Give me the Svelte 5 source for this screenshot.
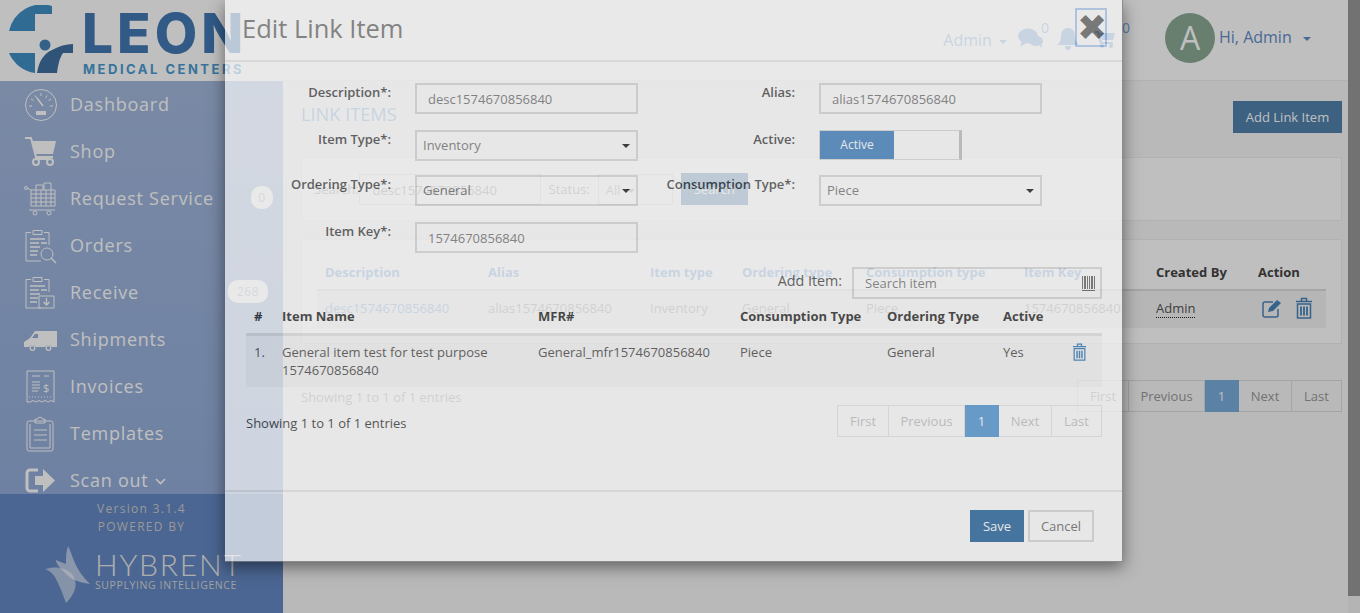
<script>
  const navItems = [
    { label: "Dashboard", icon: "gauge" },
    { label: "Shop", icon: "cart" },
    { label: "Request Service", icon: "request", badge: "0" },
    { label: "Orders", icon: "orders" },
    { label: "Receive", icon: "receive", badge: "268" },
    { label: "Shipments", icon: "truck" },
    { label: "Invoices", icon: "invoice" },
    { label: "Templates", icon: "template" },
    { label: "Scan out", icon: "scan", caret: true }
  ];
  const pages = ["First", "Previous", "1", "Next", "Last"];
</script>

{#snippet trash(w, h)}
  <svg width={w} height={h} viewBox="0 0 18 22" fill="none" stroke="currentColor" stroke-width="1.5">
    <path d="M1 4.5h16M6.5 4V1.5h5V4" />
    <path d="M2.5 7h13v14h-13z" />
    <path d="M6 9.5v9M9 9.5v9M12 9.5v9" stroke-width="1.8" />
  </svg>
{/snippet}

{#snippet navIcon(name)}
  <svg width="36" height="36" viewBox="0 0 36 36" fill="none" stroke="currentColor" stroke-width="1">
    {#if name === "gauge"}
      <circle cx="18" cy="18" r="15.5" />
      <path d="M18 6v3M8 12l2.5 1.5M28 12l-2.5 1.5M6 19h3M27 19h3M12 8.500l1.500 2.500M24 8.500l-1.500 2.500" />
      <path d="M14 11l6 8" stroke-width="1.600" />
      <path d="M13 24h10v4H13z" fill="currentColor" stroke="none" />
    {:else if name === "cart"}
      <path d="M2 4h6l5 19h17" stroke-width="2" />
      <path d="M9 7h24l-3 13H13z" fill="currentColor" stroke="none" />
      <circle cx="13" cy="28" r="3" stroke-width="2" />
      <circle cx="27" cy="28" r="3" stroke-width="2" />
      <path d="M13 25h14" stroke-width="2" />
    {:else if name === "request"}
      <circle cx="3" cy="7" r="1.500" />
      <path d="M4 7l4 2v16h24V9H8M8 13h24M8 17h24M8 21h24M13 9v16M18 9v16M23 9v16M28 9v16M6 29h26" />
      <path d="M13 9V4h7v5M21 9V2h7v7" />
      <circle cx="12" cy="32" r="2" />
      <circle cx="26" cy="32" r="2" />
    {:else if name === "orders" || name === "receive"}
      <path d="M3 4.500h5M21 4.500h5V17M3 4.500V33h15" />
      <path d="M10 2.500h9v4h-9z" />
      <path d="M7 11h15M7 15h9M18 15h6M7 19h10M7 23h8M7 27h7" stroke-width="1.300" />
      {#if name === "orders"}
        <circle cx="24" cy="26" r="6" />
        <path d="M28 30l5 5" stroke-width="1.400" />
      {:else}
        <path d="M16 21h15v12H16z" />
        <path d="M23.500 23v7M20.500 27l3 3 3-3" stroke-width="1.300" />
      {/if}
    {:else if name === "truck"}
      <path d="M1 25v-5l6-4 5-7h22v16h-5a4 4 0 0 0-7 0H13a4 4 0 0 0-7 0z" fill="currentColor" stroke="none" />
      <path d="M9 16l3-4h3v4z" fill="#97aed9" stroke="none" />
      <circle cx="9.500" cy="26" r="2.300" stroke-width="1.300" />
      <circle cx="25.500" cy="26" r="2.300" stroke-width="1.300" />
    {:else if name === "invoice"}
      <path d="M4 33V2h27v31l-3-1.500-3 1.500-3-1.500-3 1.500-3-1.500-3 1.500-3-1.500-3 1.500z" />
      <path d="M9 7h8M21 7h5M9 13h8M9 16h8M9 19h8M9 22h6" stroke-width="1.200" />
      <text x="20" y="23" font-size="11" fill="currentColor" stroke="none" font-family="Open Sans, sans-serif">$</text>
      <path d="M6 28h23" stroke-dasharray="1 2" />
    {:else if name === "template"}
      <rect x="4" y="5" width="26" height="30" rx="2" />
      <path d="M7 8v24h20V8" />
      <path d="M12 6V3h3a2 2 0 0 1 4 0h3v4H12zM11 14h13M11 19h13M11 24h13" />
    {:else if name === "scan"}
      <path d="M15 7H7a3 3 0 0 0-3 3v15a3 3 0 0 0 3 3h8" stroke-width="3" />
      <path d="M12 13h8V6l12 11.500L20 29v-7h-8z" fill="currentColor" stroke="none" />
    {/if}
  </svg>
{/snippet}

<div class="page">
  <aside class="sidebar">
    <div class="logo">
      <svg class="mark" width="66" height="70" viewBox="9 5 66 70">
        <path d="M52 6v8H35v17H9A33.500 33.500 0 0 1 52 6z" fill="#3f8fc4" />
        <path d="M9 53h26v20A33.500 33.500 0 0 1 9 53z" fill="#3f8fc4" />
        <circle cx="45" cy="45" r="5.500" fill="#4682b4" />
        <path d="M37 73c2-13 8-20 15-23 7-4 14-6 21-6v9H63c-4 6-5 13-6 20z" fill="#41719f" />
      </svg>
      <div class="brand">
        <div class="leon">LEON</div>
        <div class="medical">MEDICAL CENTERS</div>
      </div>
    </div>
    <nav>
      {#each navItems as item}
        <div class="nav-item">
          <span class="nav-icon">{@render navIcon(item.icon)}</span>
          <span class="nav-label">{item.label}</span>
          {#if item.caret}
            <svg class="chev" width="11" height="7" viewBox="0 0 11 7" fill="none" stroke="currentColor" stroke-width="1.600"><path d="M1 1l4.500 4.500L10 1" /></svg>
          {/if}
          {#if item.badge}
            <span class="badge">{item.badge}</span>
          {/if}
        </div>
      {/each}
    </nav>
    <footer class="side-foot">
      <div class="version">Version 3.1.4</div>
      <div class="version">POWERED BY</div>
      <div class="hybrent">
        <svg width="48" height="60" viewBox="0 0 48 60">
          <path d="M24 2c6 12 6 22 22 38-12-2-18-4-24-10C16 24 12 20 12 16c4 2 8 3 10 4C22 14 22 8 24 2z" fill="#fff" opacity=".55" />
          <path d="M1 25c10-3 20-2 27 5 6 8 5 18 -6 29 -3-8-5-14-9-22-3-7-7-10-12-12z" fill="#fff" opacity=".5" />
        </svg>
        <div class="hy-text">
          <div class="hy-name">HYBRENT</div>
          <div class="hy-sub">SUPPLYING INTELLIGENCE</div>
        </div>
      </div>
    </footer>
  </aside>

  <div class="main">
    <header class="topbar">
      <div class="admin">Admin <span class="caret"></span></div>
      <svg class="top-icon" width="25" height="22" viewBox="0 0 25 22" fill="#78a8dc">
        <ellipse cx="10" cy="8" rx="10" ry="7.500" />
        <path d="M4 13l-2 6 6-4z" />
        <ellipse cx="18" cy="13" rx="7" ry="5" />
        <path d="M20 16l4 4-1-6z" />
      </svg>
      <span class="count first">0</span>
      <svg class="top-icon bell" width="22" height="22" viewBox="0 0 22 22" fill="#78a8dc">
        <path d="M11 0c5 0 7 4 7 9 0 4 2 6 4 8H0c2-2 4-4 4-8 0-5 2-9 7-9zM8 18h6c0 2-1 4-3 4s-3-2-3-4z" />
      </svg>
      <svg class="top-icon cart" width="20" height="18" viewBox="0 0 20 18" fill="#78a8dc">
        <path d="M0 1h4l3 11h11v2H5L2 3H0zM5 3h15l-2 7H7z" />
        <circle cx="7" cy="16" r="2" />
        <circle cx="16" cy="16" r="2" />
      </svg>
      <span class="count second">0</span>
      <div class="avatar">A</div>
      <div class="hi">Hi, Admin <span class="caret"></span></div>
    </header>

    <div class="content">
      <div class="title-row">
        <h1>LINK ITEMS</h1>
        <button class="primary add-btn">Add Link Item</button>
      </div>

      <div class="card search-card">
        <span class="faint search-label">Search:</span>
        <div class="fake-input wide">desc1574670856840</div>
        <span class="faint">Status:</span>
        <div class="fake-input narrow">All <span class="caret"></span></div>
        <button class="primary search-btn">Search</button>
      </div>

      <div class="card table-card">
        <table class="under">
          <thead>
            <tr>
              <th style="width:163px">Description</th>
              <th style="width:162px">Alias</th>
              <th style="width:92px">Item type</th>
              <th style="width:124px">Ordering type</th>
              <th style="width:158px">Consumption type</th>
              <th style="width:132px">Item Key</th>
              <th class="dark" style="width:102px">Created By</th>
              <th class="dark">Action</th>
            </tr>
          </thead>
          <tbody>
            <tr>
              <td class="link">desc1574670856840</td>
              <td>alias1574670856840</td>
              <td>Inventory</td>
              <td>General</td>
              <td>Piece</td>
              <td>1574670856840</td>
              <td><span class="dotted">Admin</span></td>
              <td>
                <span class="row-icons">
                  <svg width="21" height="19" viewBox="0 0 21 19" fill="none" stroke="currentColor" stroke-width="1.500">
                    <path d="M16 10v6a2 2 0 0 1-2 2H3a2 2 0 0 1-2-2V5a2 2 0 0 1 2-2h8" />
                    <path d="M7 9L15 1l4 3-8 8-5 1z" fill="currentColor" stroke="none" />
                  </svg>
                  {@render trash(18, 22)}
                </span>
              </td>
            </tr>
          </tbody>
        </table>
      </div>

      <div class="under-foot">
        <span class="faint">Showing 1 to 1 of 1 entries</span>
        <div class="pager">
          {#each pages as p}
            <span class="pg" class:on={p === "1"}>{p}</span>
          {/each}
        </div>
      </div>
    </div>
  </div>

  <div class="scrollbar"><div class="thumb"></div></div>
</div>

<div class="backdrop"></div>

<div class="modal">
  <div class="m-head">
    <h2>Edit Link Item</h2>
    <button class="close">✖</button>
  </div>

  <div class="m-body">
    <div class="form">
      <div class="l">Description*:</div>
      <div class="input">desc1574670856840</div>
      <div class="l">Alias:</div>
      <div class="input">alias1574670856840</div>

      <div class="l">Item Type*:</div>
      <div class="input select">Inventory<span class="caret blk"></span></div>
      <div class="l">Active:</div>
      <div class="toggle"><span class="toggle-on">Active</span></div>

      <div class="l">Ordering Type*:</div>
      <div class="input select">General<span class="caret blk"></span></div>
      <div class="l">Consumption Type*:</div>
      <div class="input select">Piece<span class="caret blk"></span></div>

      <div class="l">Item Key*:</div>
      <div class="input">1574670856840</div>
    </div>

    <div class="add-row">
      <span class="add-label">Add Item:</span>
      <div class="search-item">
        <span>Search item</span>
        <svg width="14" height="15" viewBox="0 0 14 15" fill="#555">
          <path d="M0 0h1v13H0zM2 0h2v13H2zM5 0h1v13H5zM7 0h1v13H7zM9 0h2v13H9zM12 0h1v13h-1zM0 14h13v1H0z" />
        </svg>
      </div>
    </div>

    <table class="items">
      <thead>
        <tr>
          <th style="width:28px">#</th>
          <th style="width:256px">Item Name</th>
          <th style="width:202px">MFR#</th>
          <th style="width:147px">Consumption Type</th>
          <th style="width:116px">Ordering Type</th>
          <th style="width:66px">Active</th>
          <th></th>
        </tr>
      </thead>
      <tbody>
        <tr>
          <td>1.</td>
          <td>General item test for test purpose 1574670856840</td>
          <td>General_mfr1574670856840</td>
          <td>Piece</td>
          <td>General</td>
          <td>Yes</td>
          <td class="del">{@render trash(15, 18)}</td>
        </tr>
      </tbody>
    </table>

    <div class="m-list-foot">
      <span class="m-info">Showing 1 to 1 of 1 entries</span>
      <div class="pager m-pager">
        {#each pages as p}
          <span class="pg" class:on={p === "1"}>{p}</span>
        {/each}
      </div>
    </div>
  </div>

  <div class="m-foot">
    <button class="save">Save</button>
    <button class="cancel">Cancel</button>
  </div>
</div>

<style>
  :global(html), :global(body) {
    margin: 0;
    height: 613px;
    overflow: hidden;
  }
  :global(body) {
    font-family: "Open Sans", "Liberation Sans", sans-serif;
    font-size: 13px;
    color: #555;
  }
  .page {
    display: flex;
    height: 613px;
    background: #f7f7f8;
  }

  /* sidebar */
  .sidebar {
    width: 283px;
    flex: none;
    display: flex;
    flex-direction: column;
    color: #fff;
    background: linear-gradient(#a3b8dd 80px, #8faad8);
  }
  .logo {
    height: 81px;
    flex: none;
    background: #fff;
    display: flex;
    padding-left: 9px;
    padding-top: 5px;
    box-sizing: border-box;
    gap: 8px;
  }
  .brand {
    width: 170px;
  }
  .leon {
    font-family: Inter, "Liberation Sans", sans-serif;
    font-weight: 800;
    font-size: 55px;
    line-height: 56px;
    letter-spacing: 4px;
    margin-left: -1px;
    color: #4278b4;
  }
  .medical {
    font-family: Inter, "Liberation Sans", sans-serif;
    font-weight: 700;
    font-size: 13px;
    letter-spacing: 2.5px;
    line-height: 14px;
    margin-top: 1px;
    white-space: nowrap;
    color: #4a9ad0;
  }
  nav {
    flex: none;
    height: 413px;
    overflow: hidden;
  }
  .nav-item {
    position: relative;
    height: 47px;
    display: flex;
    align-items: center;
    font-size: 18px;
    letter-spacing: 0.75px;
    padding-left: 23px;
    box-sizing: border-box;
  }
  .nav-label {
    margin-top: -2px;
  }
  .nav-icon {
    width: 47px;
    display: flex;
  }
  .chev {
    margin-left: 6px;
    margin-top: 2px;
  }
  .badge {
    position: absolute;
    right: 10px;
    top: 11px;
    min-width: 8px;
    padding: 2px 7px;
    height: 19px;
    line-height: 19px;
    border-radius: 10px;
    background: #fff;
    color: #a9bad3;
    font-size: 12px;
    letter-spacing: 0.5px;
    text-align: center;
  }
  .nav-item:nth-child(5) .badge {
    right: 15px;
    padding: 2px 9px;
  }
  .side-foot {
    flex: 1;
    background: #6588c3;
    text-align: center;
    padding-top: 6px;
    box-sizing: border-box;
  }
  .version {
    font-size: 12px;
    line-height: 18px;
    letter-spacing: 1.3px;
    width: 283px;
    color: #ccc;
  }
  .hybrent {
    display: flex;
    margin-top: 8px;
    padding-left: 44px;
    gap: 3px;
    text-align: left;
  }
  .hy-text {
    padding-top: 5px;
  }
  .hy-name {
    font-family: Lato, "Open Sans", sans-serif;
    font-weight: 300;
    font-size: 30px;
    line-height: 30px;
    letter-spacing: 1.8px;
    color: #e8e8e8;
  }
  .hy-sub {
    font-size: 10.500px;
    line-height: 12px;
    letter-spacing: 0.6px;
    white-space: nowrap;
    color: #d8d8d8;
  }

  /* main page */
  .main {
    flex: 1;
    min-width: 0;
    display: flex;
    flex-direction: column;
  }
  .topbar {
    height: 81px;
    flex: none;
    box-sizing: border-box;
    background: #fff;
    border-bottom: 1px solid #eee;
    display: flex;
    justify-content: flex-end;
    align-items: flex-start;
    padding-right: 37px;
    color: #78a8dc;
  }
  .admin {
    font-size: 16px;
    margin-top: 29px;
    margin-right: 11px;
  }
  .caret {
    display: inline-block;
    width: 0;
    height: 0;
    border: 4px solid transparent;
    border-top-color: currentColor;
    border-bottom: 0;
    vertical-align: middle;
    margin-left: 3px;
  }
  .top-icon {
    margin-top: 28px;
  }
  .top-icon.bell {
    margin-left: 4px;
    margin-right: 16px;
  }
  .top-icon.cart {
    margin-top: 30px;
  }
  .count {
    font-size: 14px;
    margin-top: 18px;
    width: 12px;
  }
  .count.first {
    margin-left: -2px;
  }
  .count.second {
    margin-left: 7px;
    width: 10px;
  }
  .avatar {
    width: 50px;
    height: 50px;
    border-radius: 50%;
    background: #8baa96;
    color: #fff;
    font-size: 32px;
    line-height: 50px;
    text-align: center;
    margin-top: 13px;
    margin-left: 33px;
    margin-right: 4px;
  }
  .hi {
    font-size: 16px;
    margin-top: 26px;
    width: 92px;
    white-space: nowrap;
    color: #648cc8;
  }
  .hi .caret {
    margin-left: 7px;
  }
  .content {
    padding: 20px 6px 0 18px;
  }
  .title-row {
    display: flex;
    justify-content: space-between;
    height: 56px;
  }
  h1 {
    margin: 0;
    font-weight: 400;
    font-size: 18.200px;
    line-height: 26px;
    color: #78a8dc;
  }
  .primary {
    border: 1px solid #4f7fa8;
    background: #5082ad;
    color: #fff;
    font: inherit;
    padding: 0;
    border-radius: 0;
  }
  .add-btn {
    width: 109px;
    height: 32px;
  }
  .card {
    background: #fff;
    border: 1px solid #eee;
    box-sizing: border-box;
  }
  .search-card {
    height: 64px;
    display: flex;
    align-items: center;
    padding: 0 12px;
    gap: 8px;
    margin-bottom: 18px;
  }
  .search-label {
    margin-right: -8px;
  }
  .faint {
    color: #999;
  }
  .fake-input {
    height: 31px;
    line-height: 31px;
    border: 1px solid #ddd;
    box-sizing: border-box;
    color: #999;
  }
  .wide {
    width: 182px;
    padding-left: 13px;
  }
  .narrow {
    width: 75px;
    padding-left: 7px;
    color: #aaa;
  }
  .search-btn {
    width: 67px;
    height: 32px;
  }
  .table-card {
    height: 105px;
    padding: 20px 15px 0;
  }
  table {
    border-collapse: collapse;
    table-layout: fixed;
    text-align: left;
  }
  th {
    box-sizing: border-box;
  }
  .under {
    width: 1009px;
  }
  .under th {
    font-weight: 700;
    color: #78a8dc;
    padding: 3px 8px 8px;
    border-bottom: 2px solid #ddd;
    white-space: nowrap;
  }
  .under th.dark {
    color: #444;
  }
  .under td {
    background: #f3f3f3;
    padding: 6px 8px 9px;
    height: 18px;
    color: #999;
    white-space: nowrap;
  }
  .under td.link {
    color: #78a8dc;
  }
  .dotted {
    color: #555;
    border-bottom: 1px dotted #222;
  }
  .row-icons {
    display: flex;
    gap: 12px;
    align-items: center;
    margin-left: 4px;
    color: #4985bb;
  }
  .under-foot {
    display: flex;
    justify-content: space-between;
    margin-top: 36px;
  }
  .under-foot .faint {
    margin-top: 8px;
  }
  .pager {
    display: grid;
    grid-template-columns: 52px 76px 34px 53px 50px;
    height: 32px;
    box-sizing: border-box;
  }
  .pg {
    border: 1px solid #ddd;
    border-left: 0;
    text-align: center;
    line-height: 30px;
    color: #999;
  }
  .pg:first-child {
    border-left: 1px solid #ddd;
  }
  .pg.on {
    background: #7aacdc;
    border-color: #7aacdc;
    color: #fff;
  }
  .scrollbar {
    width: 12px;
    flex: none;
    background: #999;
  }
  .thumb {
    height: 17px;
    margin-top: 596px;
    background: #f1f1f1;
  }
  .backdrop {
    position: absolute;
    inset: 0;
    background: rgba(0, 0, 0, 0.25);
  }

  /* modal */
  .modal {
    position: absolute;
    left: 225px;
    top: 0;
    width: 897px;
    height: 561px;
    background: #fff;
    opacity: 0.667;
    border-right: 1px solid #777;
    border-bottom: 1px solid #777;
    box-shadow: 0 5px 15px rgba(0, 0, 0, 0.7);
    display: flex;
    flex-direction: column;
    color: #222;
  }
  .m-head {
    height: 62px;
    flex: none;
    box-sizing: border-box;
    border-bottom: 2px solid #e5e5e5;
    display: flex;
    justify-content: space-between;
    padding: 8px 15px 0 17px;
  }
  h2 {
    margin: 0;
    font-weight: 400;
    font-size: 25.500px;
    line-height: 41px;
    color: #666;
  }
  .close {
    width: 32px;
    height: 39px;
    padding: 0;
    background: none;
    border: 2px solid #a8c6f0;
    color: #555;
    font-size: 36px;
    line-height: 34px;
  }
  .m-body {
    flex: 1;
    padding: 21px 20px 0 21px;
  }
  .form {
    display: grid;
    grid-template-columns: 145px 223px 133px 223px;
    grid-template-rows: 47px 45px 47px 47px;
    column-gap: 24px;
  }
  .l {
    display: flex;
    justify-content: flex-end;
    font-weight: 600;
    line-height: 18px;
    color: #333;
    white-space: nowrap;
  }
  .input {
    box-sizing: border-box;
    height: 31px;
    border: 2px solid #d4d4d4;
    line-height: 29px;
    padding-left: 11px;
    color: #666;
    position: relative;
  }
  .select {
    padding-left: 6px;
    line-height: 27px;
  }
  .caret.blk {
    position: absolute;
    right: 6px;
    top: 12px;
    color: #000;
  }
  .toggle {
    box-sizing: border-box;
    width: 143px;
    height: 30px;
    border: 1px solid #d4d4d4;
    border-right: 3px solid #bbb;
  }
  .toggle-on {
    display: block;
    width: 74px;
    height: 28px;
    line-height: 28px;
    text-align: center;
    font-size: 12px;
    background: #2e75bb;
    color: #fff;
  }
  .add-row {
    display: flex;
    justify-content: flex-end;
    align-items: center;
    margin-top: -2px;
    height: 32px;
    gap: 10px;
  }
  .add-label {
    font-size: 14.300px;
    margin-top: -5px;
    color: #333;
  }
  .search-item {
    box-sizing: border-box;
    width: 250px;
    height: 32px;
    border: 2px solid #d4d4d4;
    padding: 0 4px 0 11px;
    display: flex;
    justify-content: space-between;
    align-items: center;
    color: #666;
  }
  .items {
    width: 856px;
    margin-top: 8px;
  }
  .items th {
    font-weight: 700;
    padding: 0 8px 8px;
    line-height: 18px;
    height: 26px;
    border-bottom: 3px solid #ddd;
    color: #111;
    white-space: nowrap;
  }
  .items td {
    background: #f5f5f5;
    padding: 7px 8px 8px;
    line-height: 18px;
    vertical-align: top;
    color: #333;
  }
  .items td.del {
    color: #1b6bb0;
    padding: 7px 0 0 11px;
  }
  .m-list-foot {
    display: flex;
    justify-content: space-between;
    margin-top: 18px;
  }
  .m-info {
    margin-top: 9px;
  }
  .m-pager .pg {
    color: #bbb;
    border-color: #e4e4e4;
  }
  .m-pager .pg.on {
    background: #408bcf;
    border-color: #408bcf;
    color: #fff;
  }
  .m-foot {
    height: 71px;
    flex: none;
    box-sizing: border-box;
    border-top: 2px solid #e5e5e5;
    display: flex;
    justify-content: flex-end;
    gap: 4px;
    padding: 18px 28px 0 0;
  }
  .m-foot button {
    height: 32px;
    font: inherit;
    padding: 0;
    border-radius: 0;
  }
  .save {
    width: 54px;
    background: #0c5492;
    border: 1px solid #0c5492;
    color: #fff;
  }
  .cancel {
    width: 66px;
    background: #fff;
    border: 2px solid #d4d4d4;
    color: #555;
  }
</style>
